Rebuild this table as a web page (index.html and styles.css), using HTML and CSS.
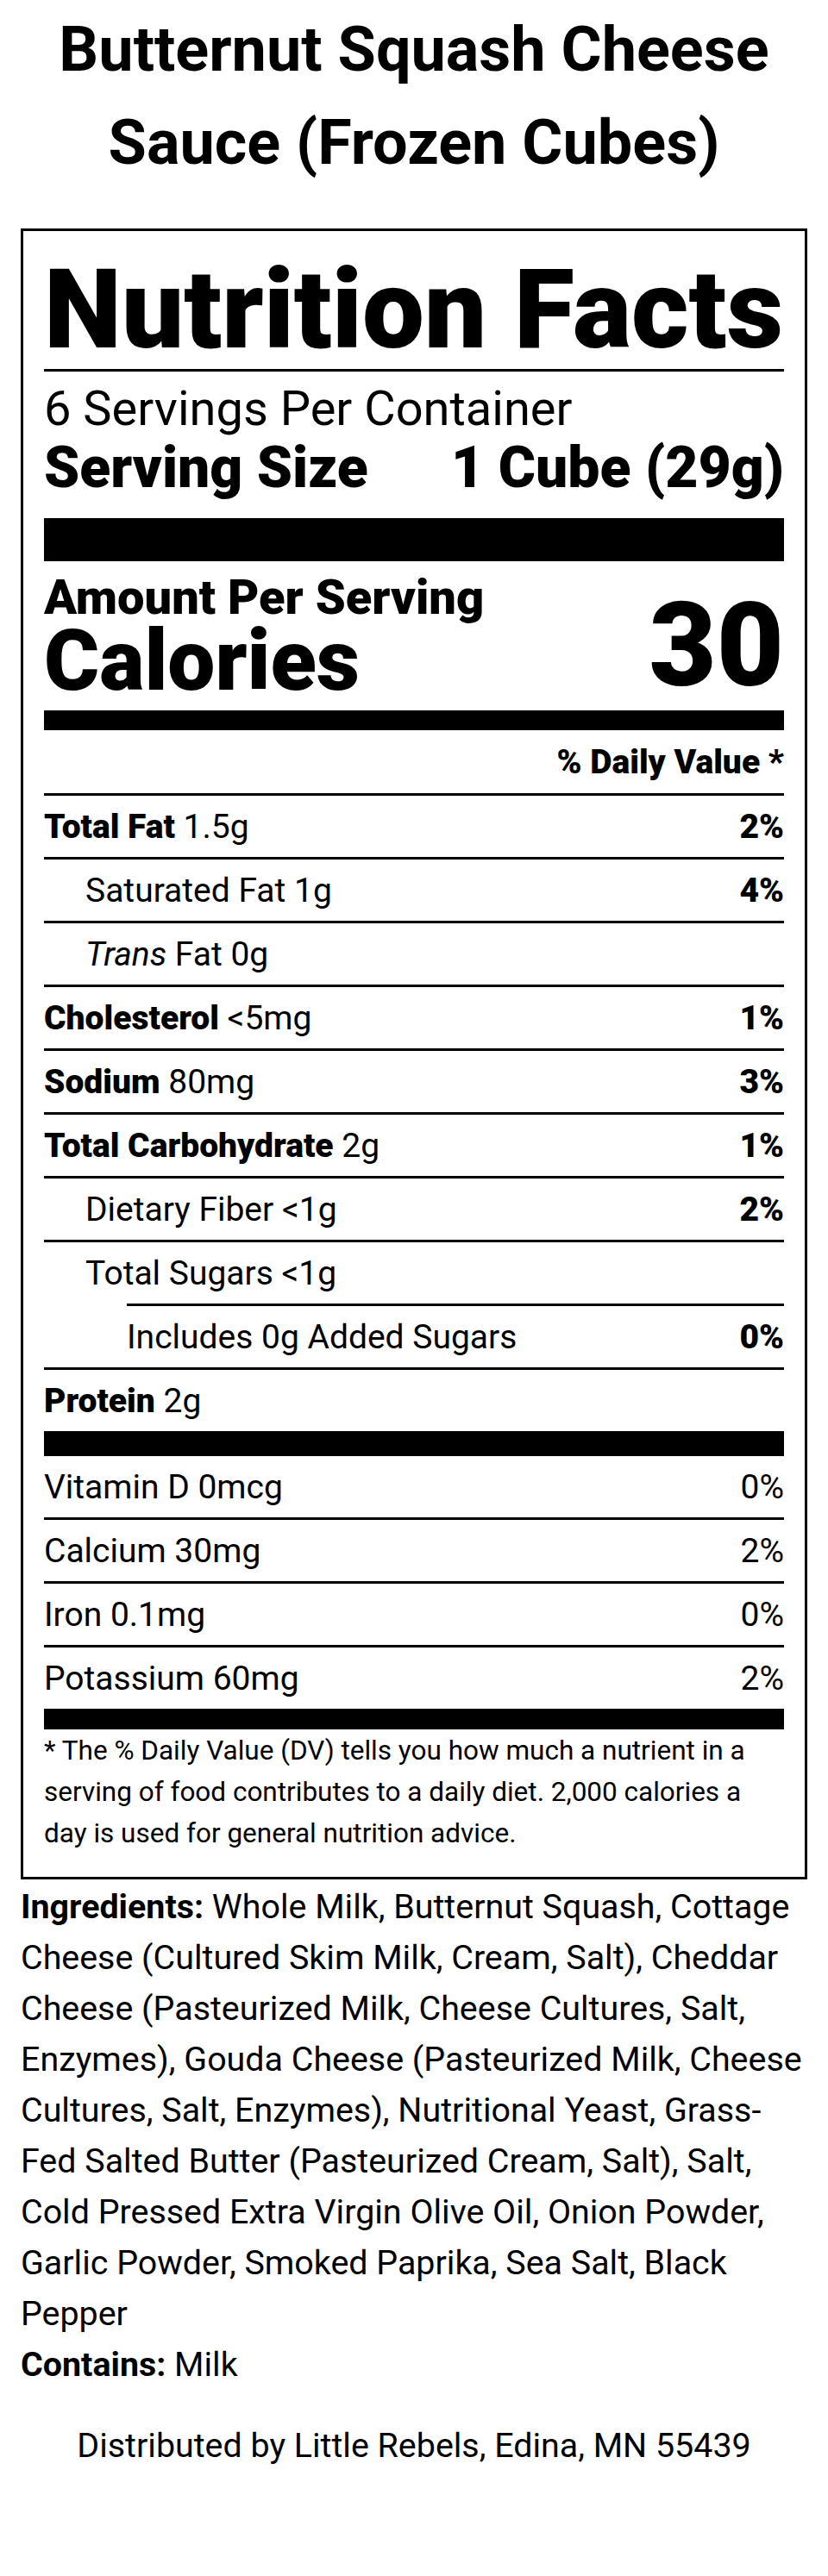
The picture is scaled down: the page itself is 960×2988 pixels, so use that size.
FILE: index.html
```html
<!DOCTYPE html>
<html lang="en">
<head>
<meta charset="utf-8">
<title>Butternut Squash Cheese Sauce (Frozen Cubes)</title>
<link rel="stylesheet" href="styles.css">
</head>
<body>
<div class="page">
  <h1 class="title">Butternut Squash Cheese Sauce (Frozen Cubes)</h1>

  <section class="label">
    <h2 class="nf-title">Nutrition Facts</h2>
    <div class="servings">6 Servings Per Container</div>
    <div class="serving-size"><span>Serving Size</span><span>1 Cube (29g)</span></div>
    <div class="bar bar-thick"></div>

    <div class="calories-row">
      <div class="cal-left">
        <div class="amount">Amount Per Serving</div>
        <div class="cal-label">Calories</div>
      </div>
      <div class="cal-value">30</div>
    </div>
    <div class="bar bar-medium"></div>

    <div class="dv-head">% Daily Value *</div>

    <div class="row"><span><b>Total Fat</b> 1.5g</span><b>2%</b></div>
    <div class="row indent"><span>Saturated Fat 1g</span><b>4%</b></div>
    <div class="row indent"><span><i>Trans</i> Fat 0g</span></div>
    <div class="row"><span><b>Cholesterol</b> &lt;5mg</span><b>1%</b></div>
    <div class="row"><span><b>Sodium</b> 80mg</span><b>3%</b></div>
    <div class="row"><span><b>Total Carbohydrate</b> 2g</span><b>1%</b></div>
    <div class="row indent"><span>Dietary Fiber &lt;1g</span><b>2%</b></div>
    <div class="row indent no-rule"><span>Total Sugars &lt;1g</span></div>
    <div class="rule-indent"></div>
    <div class="row indent2"><span>Includes 0g Added Sugars</span><b>0%</b></div>
    <div class="row no-rule"><span><b>Protein</b> 2g</span></div>
    <div class="bar bar-protein"></div>

    <div class="row"><span>Vitamin D 0mcg</span><span>0%</span></div>
    <div class="row"><span>Calcium 30mg</span><span>2%</span></div>
    <div class="row"><span>Iron 0.1mg</span><span>0%</span></div>
    <div class="row no-rule"><span>Potassium 60mg</span><span>2%</span></div>
    <div class="bar bar-foot"></div>

    <p class="footnote">* The % Daily Value (DV) tells you how much a nutrient in a serving of food contributes to a daily diet. 2,000 calories a day is used for general nutrition advice.</p>
  </section>

  <p class="ingredients"><b>Ingredients:</b> Whole Milk, Butternut Squash, Cottage Cheese (Cultured Skim Milk, Cream, Salt), Cheddar Cheese (Pasteurized Milk, Cheese Cultures, Salt, Enzymes), Gouda Cheese (Pasteurized Milk, Cheese Cultures, Salt, Enzymes), Nutritional Yeast, Grass-Fed Salted Butter (Pasteurized Cream, Salt), Salt, Cold Pressed Extra Virgin Olive Oil, Onion Powder, Garlic Powder, Smoked Paprika, Sea Salt, Black Pepper</p>
  <p class="contains"><b>Contains:</b> Milk</p>

  <p class="distributed">Distributed by Little Rebels, Edina, MN 55439</p>
</div>
</body>
</html>
```

FILE: styles.css
```css
html, body {
  background: #fff;
}

body {
  margin: 0;
  font-family: Roboto, "Liberation Sans", Arial, sans-serif;
  color: #000;
}

.page {
  padding: 4px 24px 0;
}

.title {
  margin: 0;
  font-size: 72px;
  line-height: 108px;
  font-weight: 700;
  text-align: center;
}

.label {
  margin-top: 45px;
  border: 3px solid #000;
  padding: 22px 24px 26px;
}

.nf-title {
  margin: 0;
  font-size: 128px;
  line-height: 138px;
  font-weight: 900;
  white-space: nowrap;
  border-bottom: 3px solid #000;
}

.servings {
  margin-top: 15px;
  font-size: 56px;
  line-height: 56px;
}

.serving-size {
  margin-top: 8px;
  display: flex;
  justify-content: space-between;
  font-size: 66px;
  line-height: 66px;
  font-weight: 900;
}

.bar {
  background: #000;
}

.bar-thick {
  margin-top: 25px;
  height: 50px;
}

.calories-row {
  margin-top: 14px;
  display: flex;
  justify-content: space-between;
  align-items: flex-end;
  font-weight: 900;
}

.amount {
  font-size: 56px;
  line-height: 56px;
}

.cal-label {
  font-size: 98px;
  line-height: 91px;
}

.cal-value {
  font-size: 135px;
  line-height: 126px;
}

.bar-medium {
  margin-top: 12px;
  height: 23px;
}

.dv-head {
  padding-top: 2px;
  font-size: 39px;
  line-height: 71px;
  font-weight: 900;
  text-align: right;
  border-bottom: 3px solid #000;
}

.row {
  display: flex;
  justify-content: space-between;
  padding-top: 2px;
  font-size: 39px;
  line-height: 69px;
  border-bottom: 3px solid #000;
}

.row b {
  font-weight: 900;
}

.row.no-rule {
  border-bottom: none;
}

.row.indent {
  padding-left: 48px;
}

.row.indent2 {
  padding-left: 96px;
}

.rule-indent {
  margin-left: 96px;
  height: 3px;
  background: #000;
}

.bar-protein {
  height: 29px;
}

.bar-foot {
  height: 24px;
}

.footnote {
  margin: 1px 0 0;
  font-size: 31.5px;
  line-height: 48px;
}

.ingredients,
.contains {
  margin: 0;
  font-size: 39.4px;
  line-height: 59px;
}

.ingredients {
  margin-top: 2px;
}

.distributed {
  margin: 35px 0 0;
  font-size: 39.4px;
  line-height: 59px;
  text-align: center;
}
```
